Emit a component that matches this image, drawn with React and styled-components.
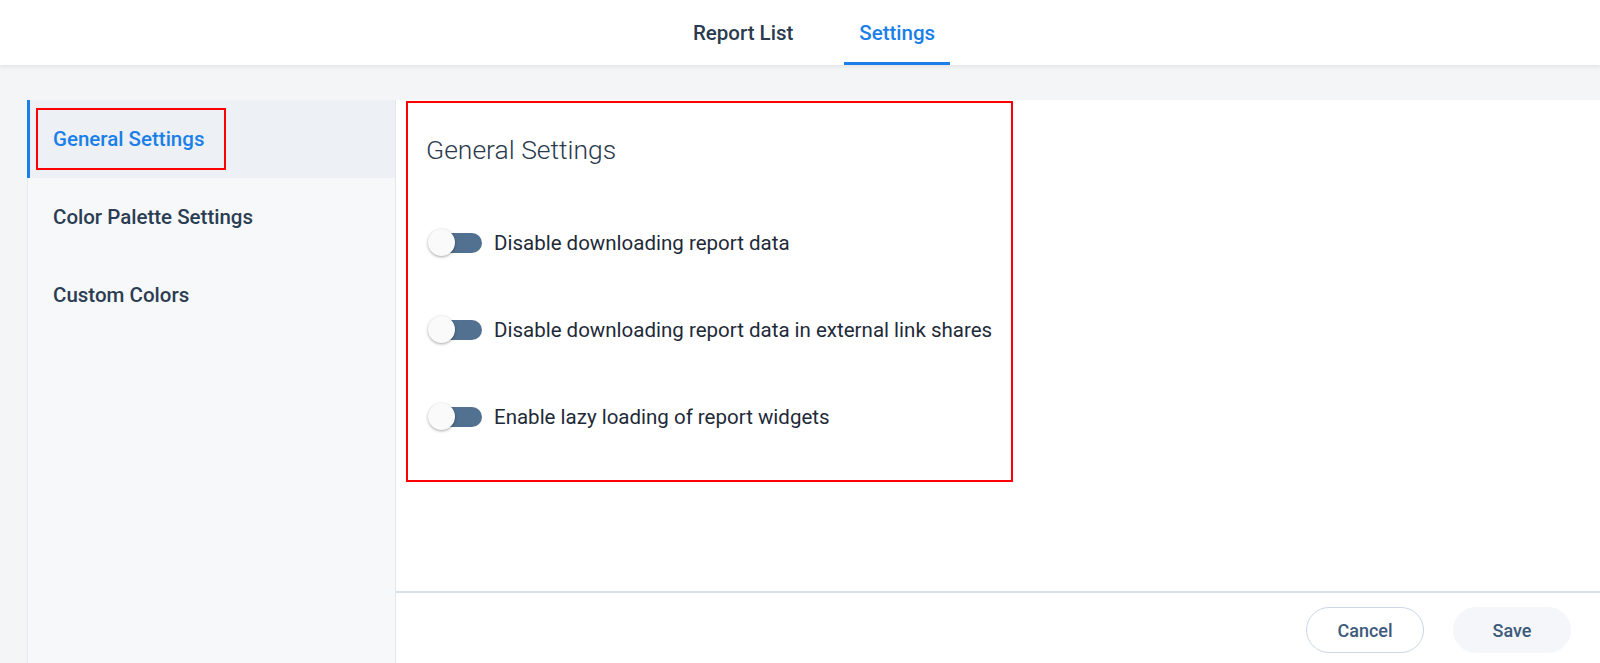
import { useState } from 'react';
import styled, { createGlobalStyle } from 'styled-components';

const GlobalStyle = createGlobalStyle`
  html, body {
    margin: 0;
    padding: 0;
    height: 100%;
    background: #f4f5f7;
    font-family: Roboto, 'Liberation Sans', Arial, sans-serif;
  }
  #root {
    height: 100%;
  }
  * {
    box-sizing: border-box;
  }
`;

const Page = styled.div`
  display: flex;
  flex-direction: column;
  height: 100vh;
  overflow: hidden;
`;

const Header = styled.header`
  height: 65px;
  flex-shrink: 0;
  background: #fff;
  box-shadow: 0 2px 4px rgba(0, 0, 0, 0.07);
  display: flex;
  justify-content: center;
  align-items: stretch;
  padding-left: 28px;
  position: relative;
  z-index: 1;
`;

const Tab = styled.button`
  border: none;
  background: none;
  font-family: inherit;
  font-size: 20.5px;
  font-weight: 500;
  padding: 3px 15px 0;
  margin: 0 18px;
  cursor: pointer;
  color: ${({ active }) => (active ? '#1a7fe8' : '#2b3b4e')};
  border-bottom: 3px solid ${({ active }) => (active ? '#1a7fe8' : 'transparent')};
`;

const Body = styled.div`
  flex: 1;
  display: flex;
  padding: 35px 0 0 27px;
  min-height: 0;
`;

const Sidebar = styled.nav`
  width: 369px;
  flex-shrink: 0;
  background: #f7f8fa;
  border-left: 1px solid #e5e8ed;
  border-right: 1px solid #e4e8ee;
`;

const NavItem = styled.div`
  height: 78px;
  display: flex;
  align-items: center;
  padding-left: 6px;
  margin-left: -1px;
  border-left: 3px solid ${({ active }) => (active ? '#1a7fe8' : 'transparent')};
  background: ${({ active }) => (active ? '#edf0f4' : 'transparent')};
  color: ${({ active }) => (active ? '#1a7fe8' : '#2b3d52')};
  font-size: 20.5px;
  font-weight: 500;
  cursor: pointer;
`;

const NavLabel = styled.span`
  display: inline-block;
  padding: 18px 20px 18px 15px;
  line-height: 22px;
  border: 2px solid ${({ marked }) => (marked ? '#ff0000' : 'transparent')};
`;

const Main = styled.main`
  flex: 1;
  background: #fff;
  display: flex;
  flex-direction: column;
  min-width: 0;
`;

const Content = styled.div`
  flex: 1;
  padding: 1px 0 0 10px;
`;

const Section = styled.section`
  width: 607px;
  height: 381px;
  border: 2px solid #ff0000;
  padding: 32px 18px 17px;
`;

const Heading = styled.h2`
  margin: 0 0 34px;
  font-size: 26.5px;
  line-height: 30px;
  font-weight: 300;
  color: #2a3a4c;
`;

const Row = styled.label`
  height: 87px;
  display: flex;
  align-items: center;
  gap: 12px;
  margin-left: 2px;
  cursor: pointer;
`;

const Switch = styled.span`
  position: relative;
  width: 54px;
  height: 27px;
  flex-shrink: 0;
`;

const Track = styled.span`
  position: absolute;
  right: 0;
  top: 4px;
  width: 42px;
  height: 20px;
  border-radius: 10px;
  background: ${({ on }) => (on ? '#1a7fe8' : '#52708f')};
`;

const Thumb = styled.span`
  position: absolute;
  top: 0;
  left: ${({ on }) => (on ? '27px' : '0')};
  width: 27px;
  height: 27px;
  border-radius: 50%;
  background: #fafafa;
  box-shadow: 0 1px 3px rgba(0, 0, 0, 0.35);
`;

const RowText = styled.span`
  font-size: 20.5px;
  color: #1e2a38;
`;

const Footer = styled.footer`
  height: 72px;
  flex-shrink: 0;
  border-top: 2px solid #d8e0ea;
  display: flex;
  justify-content: flex-end;
  align-items: flex-start;
  gap: 29px;
  padding: 14px 29px 0 0;
`;

const Button = styled.button`
  width: 118px;
  height: 46px;
  border-radius: 23px;
  font-family: inherit;
  font-size: 18px;
  font-weight: 500;
  color: #3d5a7a;
  cursor: pointer;
  border: 1.5px solid ${({ primary }) => (primary ? '#f4f6f9' : '#cbd7e5')};
  background: ${({ primary }) => (primary ? '#f4f6f9' : '#fff')};
`;

const options = [
  'Disable downloading report data',
  'Disable downloading report data in external link shares',
  'Enable lazy loading of report widgets',
];

const navItems = ['General Settings', 'Color Palette Settings', 'Custom Colors'];

function App() {
  const [values, setValues] = useState([false, false, false]);

  return (
    <Page>
      <GlobalStyle />
      <Header>
        <Tab>Report List</Tab>
        <Tab active>Settings</Tab>
      </Header>
      <Body>
        <Sidebar>
          {navItems.map((item, idx) => (
            <NavItem key={item} active={idx === 0}>
              <NavLabel marked={idx === 0}>{item}</NavLabel>
            </NavItem>
          ))}
        </Sidebar>
        <Main>
          <Content>
            <Section>
              <Heading>General Settings</Heading>
              {options.map((text, idx) => (
                <Row
                  key={text}
                  onClick={() => setValues(values.map((v, i) => (i === idx ? !v : v)))}
                >
                  <Switch>
                    <Track on={values[idx]} />
                    <Thumb on={values[idx]} />
                  </Switch>
                  <RowText>{text}</RowText>
                </Row>
              ))}
            </Section>
          </Content>
          <Footer>
            <Button>Cancel</Button>
            <Button primary>Save</Button>
          </Footer>
        </Main>
      </Body>
    </Page>
  );
}

export default App;
